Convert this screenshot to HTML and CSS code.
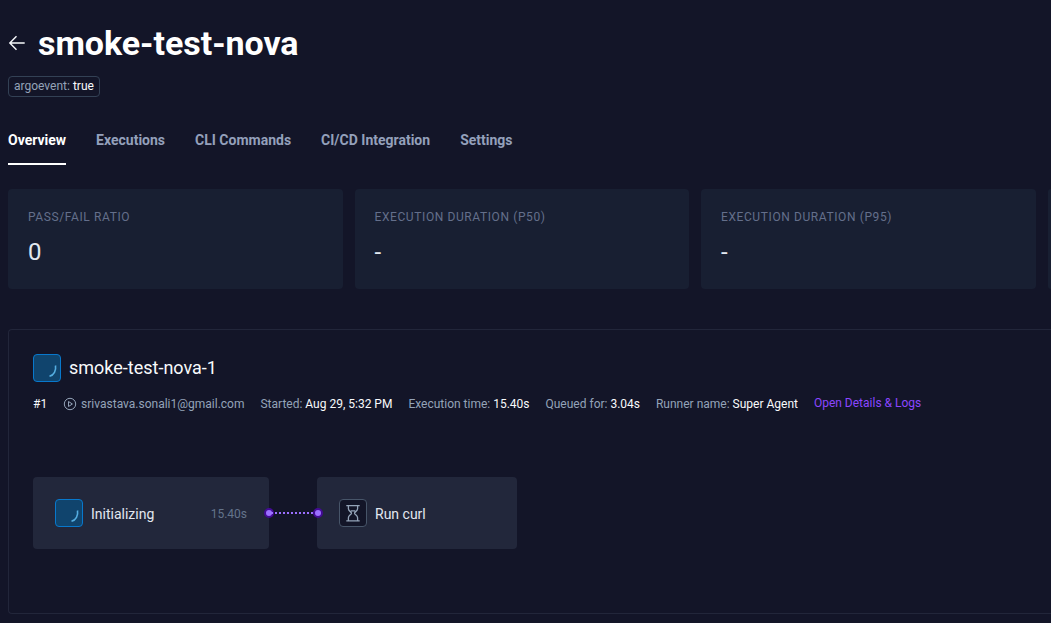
FILE: index.html
```html
<!DOCTYPE html>
<html lang="en">
<head>
<meta charset="utf-8">
<title>smoke-test-nova</title>
<link rel="stylesheet" href="styles.css">
</head>
<body>
<div class="page">
<header class="header">
  <svg class="back" width="18" height="18" viewBox="0 0 18 18"><path d="M16.7 9H2M8.5 2.2L1.8 9l6.7 6.8"/></svg>
  <h1 class="title">smoke-test-nova</h1>
</header>
<div class="tag">argoevent: <b>true</b></div>
<nav class="tabs">
  <a class="tab active">Overview</a>
  <a class="tab">Executions</a>
  <a class="tab">CLI Commands</a>
  <a class="tab">CI/CD Integration</a>
  <a class="tab">Settings</a>
</nav>
<section class="metrics">
  <div class="metric"><div class="label">PASS/FAIL RATIO</div><div class="value">0</div></div>
  <div class="metric"><div class="label">EXECUTION DURATION (P50)</div><div class="value">-</div></div>
  <div class="metric"><div class="label">EXECUTION DURATION (P95)</div><div class="value">-</div></div>
  <div class="metric clipped"></div>
</section>
<main class="panel">
  <div class="run">
    <span class="status running"><svg width="26" height="26" viewBox="0 0 26 26"><path d="M21.5 10.5C22.3 15.5 20 20 15.5 21.3"/></svg></span>
    <h2 class="run-name">smoke-test-nova-1</h2>
  </div>
  <div class="meta">
    <b>#1</b>
    <span class="actor"><svg width="14" height="14" viewBox="0 0 14 14"><circle cx="7" cy="7" r="5.7"/><path d="M5.5 4.5v5L9.4 7z"/></svg>srivastava.sonali1@gmail.com</span>
    <span>Started: <b>Aug 29, 5:32 PM</b></span>
    <span>Execution time: <b>15.40s</b></span>
    <span>Queued for: <b>3.04s</b></span>
    <span>Runner name: <b>Super Agent</b></span>
    <a class="link">Open Details &amp; Logs</a>
  </div>
  <div class="flow">
    <div class="node first">
      <span class="status running"><svg width="26" height="26" viewBox="0 0 26 26"><path d="M21.5 10.5C22.3 15.5 20 20 15.5 21.3"/></svg></span>
      <span class="step">Initializing</span>
      <span class="time">15.40s</span>
    </div>
    <svg class="connector" width="60" height="12" viewBox="0 0 60 12"><circle cx="6" cy="6" r="4"/><circle cx="55" cy="6" r="4"/><path d="M8 6H52"/></svg>
    <div class="node second">
      <span class="status waiting"><svg width="26" height="26" viewBox="0 0 26 26"><path d="M6.3 5.6h13.4M6.3 20.9h13.4M8.4 5.6v3.2c0 2.4 3.1 3 3.1 4.4s-3.1 2.2-3.1 4.6v3.1M17.6 5.6v3.2c0 2.4-3.1 3-3.1 4.4s3.1 2.2 3.1 4.6v3.1M10.8 10.8h4.4"/></svg></span>
      <span class="step">Run curl</span>
    </div>
  </div>
</main>
</div>
</body>
</html>
```

FILE: styles.css
```css
* { box-sizing: border-box; }
body {
  margin: 0;
  background: #131528;
  color: #94a3b8;
  font-family: Roboto, sans-serif;
  font-size: 12px;
}
.page { width: 100%; height: 623px; padding: 24px 0 0 8px; overflow: hidden; }
b { font-weight: 400; color: #f8fafc; }
.header { display: flex; align-items: center; gap: 12px; height: 38px; }
.back { fill: none; stroke: #f8fafc; stroke-width: 1.4; }
.title { margin: 0; font-size: 34px; line-height: 38px; font-weight: 700; letter-spacing: -0.04px; color: #fff; }
.tag {
  width: max-content;
  height: 21px;
  margin-top: 14px;
  padding: 0 5px;
  border: 1px solid #334155;
  border-radius: 4px;
  line-height: 18px;
}
.tabs { display: flex; gap: 30px; height: 42px; margin-top: 26px; }
.tab { height: 42px; font-size: 14px; line-height: 34px; font-weight: 700; color: #94a0bb; }
.tab.active { color: #fff; border-bottom: 2px solid #fff; }
.metrics { display: grid; grid-template-columns: repeat(3, 334.5px) 1fr; gap: 12px; height: 100px; margin-top: 24px; }
.metric { padding: 20px; border-radius: 4px; background: #181f32; }
.metric.clipped { padding: 0; border-radius: 4px 0 0 4px; }
.label { line-height: 16px; letter-spacing: 0.6px; color: #646f8b; }
.value { margin-top: 12px; font-size: 24px; line-height: 30px; color: #e2e8f0; }
.panel {
  height: 285px;
  margin-top: 40px;
  padding: 24px;
  border: 1px solid #22263a;
  border-right: 0;
  border-radius: 4px 0 0 4px;
}
.run { display: flex; align-items: center; gap: 8px; height: 28px; }
.run-name { margin: 0; font-size: 18px; line-height: 28px; font-weight: 400; color: #f8fafc; }
.status { display: block; width: 28px; height: 28px; flex: none; border: 1px solid; border-radius: 4px; }
.status svg { display: block; fill: none; }
.running { background: #10446d; border-color: #0878cc; }
.running svg { stroke: #55aee1; stroke-width: 1.6; }
.waiting { background: #131528; border-color: #475569; }
.waiting svg { stroke: #94a3b8; stroke-width: 1.3; }
.meta { display: flex; gap: 15.96px; margin-top: 14px; height: 16px; line-height: 16px; white-space: nowrap; }
.actor { display: flex; align-items: center; gap: 4px; }
.actor svg { fill: none; stroke: #94a3b8; stroke-width: 1; }
.link { line-height: 14px; color: #8b46ff; }
.flow { display: flex; align-items: center; margin-top: 65px; }
.node { display: flex; align-items: center; gap: 8px; height: 72px; padding: 0 22px; border-radius: 4px; background: #22273b; }
.first { width: 236px; }
.second { width: 200px; }
.step { font-size: 14px; line-height: 20px; padding-top: 1px; color: #e2e8f0; }
.time { margin-left: auto; padding-top: 1px; color: #64748b; }
.connector { margin: 0 -6px; position: relative; z-index: 1; }
.connector path { stroke: #9b70ff; stroke-width: 2; stroke-dasharray: 2 2; }
.connector circle { fill: #9b70ff; stroke: #430b94; stroke-width: 2; }
```
